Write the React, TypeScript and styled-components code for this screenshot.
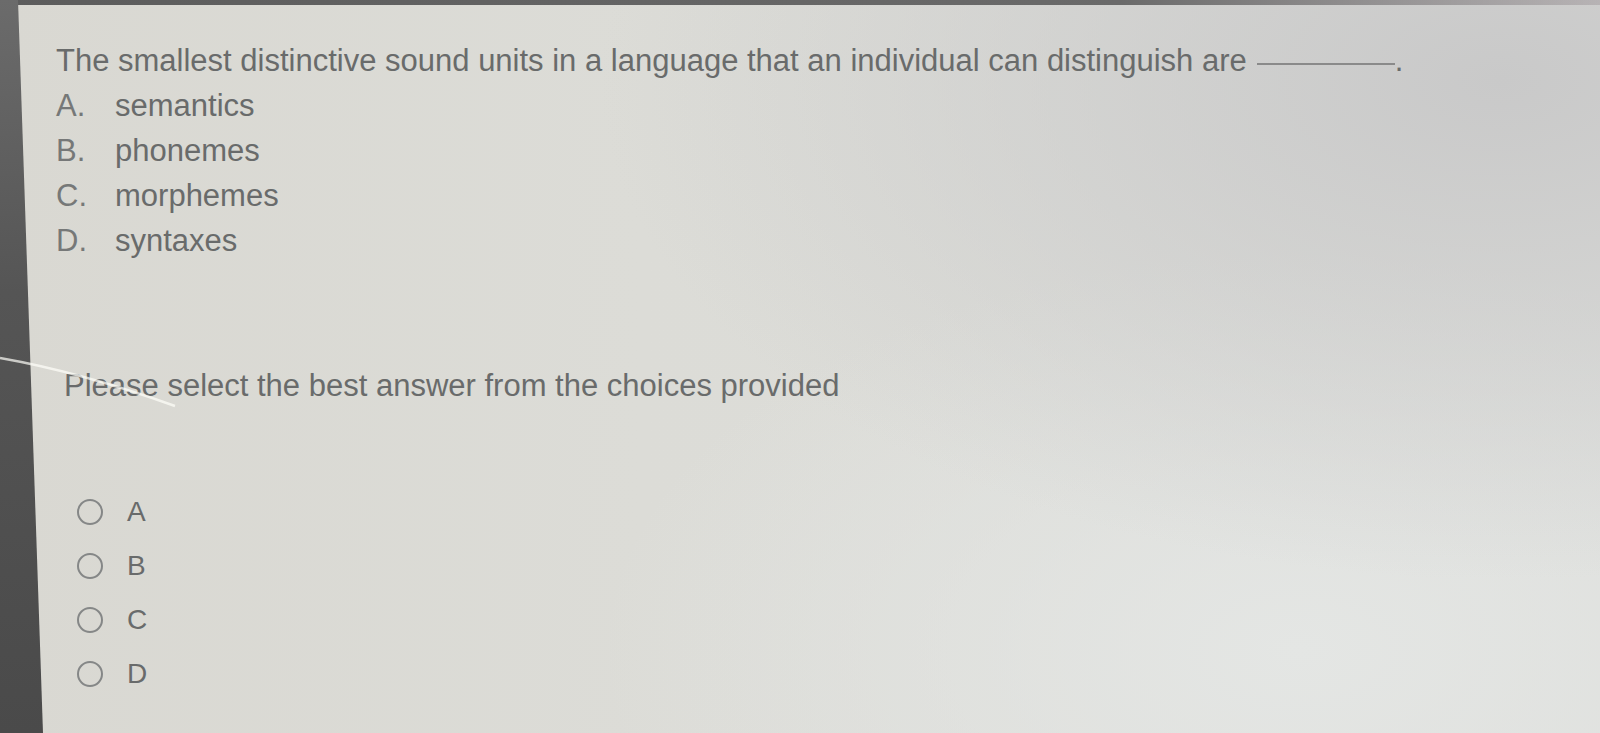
import React from "react";
import styled, { createGlobalStyle } from "styled-components";

const GlobalStyle = createGlobalStyle`
  html, body {
    margin: 0;
    padding: 0;
    overflow: hidden;
  }
  body {
    font-family: "Liberation Sans", Arial, sans-serif;
  }
`;

const Frame = styled.div`
  position: relative;
  display: flex;
  width: 1600px;
  height: 733px;
  overflow: hidden;
  background:
    radial-gradient(ellipse 900px 500px at 1500px 80px, #c9c9c9 0%, rgba(201, 201, 201, 0) 100%),
    radial-gradient(ellipse 700px 400px at 1300px 650px, #e4e6e4 0%, rgba(228, 230, 228, 0) 100%),
    linear-gradient(90deg, #d9d8d2 0%, #dcdcd7 40%, #dddedb 100%);
`;

const TopEdge = styled.div`
  position: absolute;
  left: 0;
  top: 0;
  width: 100%;
  height: 5px;
  background: linear-gradient(90deg, #5c5c5c 0%, #6a6a6a 70%, rgba(150, 140, 145, 0.4) 100%);
`;

const Bezel = styled.div`
  flex: 0 0 44px;
  height: 100%;
  background: linear-gradient(180deg, #6b6b6b 0%, #555 40%, #4a4a4a 100%);
  clip-path: polygon(0 0, 18px 0, 43px 100%, 0 100%);
`;

const Glare = styled.svg`
  position: absolute;
  left: 0;
  top: 330px;
  pointer-events: none;
`;

const Screen = styled.div`
  flex: 1;
  display: flex;
  flex-direction: column;
  padding: 38px 0 0 12px;
  color: #696b6b;
`;

const Question = styled.div`
  font-size: 31px;
  line-height: 45px;
  white-space: nowrap;
`;

const Blank = styled.span`
  display: inline-block;
  width: 138px;
  margin-left: 10px;
  border-bottom: 2px solid #8a8a8a;
  transform: translateY(-6px);
`;

const OptionList = styled.div`
  display: flex;
  flex-direction: column;
`;

const Option = styled.div`
  display: flex;
  font-size: 31px;
  line-height: 45px;
`;

const OptionKey = styled.span`
  width: 59px;
  color: #767878;
`;

const Prompt = styled.div`
  margin: 100px 0 0 8px;
  font-size: 31px;
  line-height: 45px;
  white-space: nowrap;
`;

const Choices = styled.div`
  display: flex;
  flex-direction: column;
  margin: 77px 0 0 21px;
`;

const Choice = styled.label`
  display: flex;
  align-items: center;
  height: 54px;
  gap: 24px;
  font-size: 28px;
`;

const Radio = styled.span`
  width: 22px;
  height: 22px;
  border-radius: 50%;
  border: 2px solid #858787;
`;

const options = [
  { key: "A", text: "semantics" },
  { key: "B", text: "phonemes" },
  { key: "C", text: "morphemes" },
  { key: "D", text: "syntaxes" },
];

export default function App() {
  return (
    <>
      <GlobalStyle />
      <Frame>
        <TopEdge />
        <Bezel />
        <Glare width="220" height="90" viewBox="0 0 220 90">
          <path
            d="M0 28 Q80 42 175 76"
            stroke="rgba(255,255,250,0.7)"
            strokeWidth="2.5"
            fill="none"
          />
        </Glare>
        <Screen>
          <Question>
            The smallest distinctive sound units in a language that an individual can distinguish are
            <Blank />.
          </Question>
          <OptionList>
            {options.map((o) => (
              <Option key={o.key}>
                <OptionKey>{o.key}.</OptionKey>
                <span>{o.text}</span>
              </Option>
            ))}
          </OptionList>
          <Prompt>Please select the best answer from the choices provided</Prompt>
          <Choices>
            {options.map((o) => (
              <Choice key={o.key}>
                <Radio />
                <span>{o.key}</span>
              </Choice>
            ))}
          </Choices>
        </Screen>
      </Frame>
    </>
  );
}
